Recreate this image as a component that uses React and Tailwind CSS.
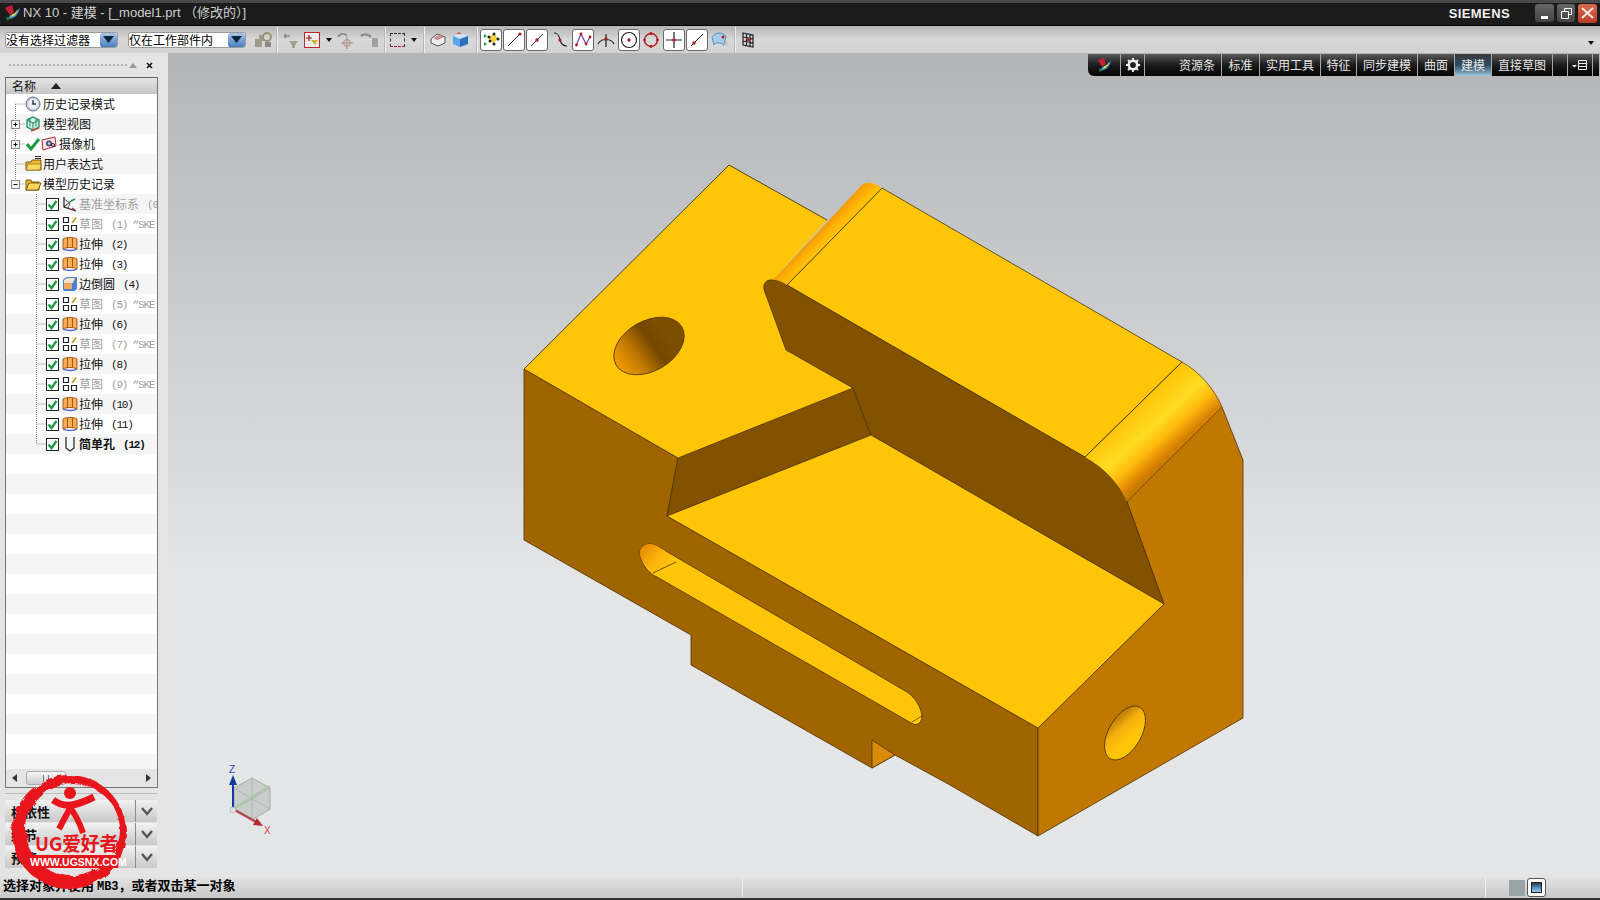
const cjk = { fontFamily: '"Noto Sans CJK SC", "Liberation Sans", sans-serif' }
const mono = { fontFamily: '"Liberation Mono", "Noto Sans CJK SC", monospace' }

function NxLogo({ size = 18 }) {
  return (
    <svg width={size} height={size} viewBox="0 0 18 18">
      <path d="M2 4 L9 1 L11 8 L7 11Z" fill="#c81e3a" />
      <path d="M7 11 C10 12 14 9 17 3 C16 10 12 15 5 15Z" fill="#3a9ad8" />
      <path d="M9 10 C11 10 13 8 15 5 C14 9 12 12 8 13Z" fill="#e8d84a" />
      <path d="M3 13 L8 14 L4 17Z" fill="#2f7d3a" />
    </svg>
  )
}

function Combo({ width, label }) {
  return (
    <div className="flex h-[16px] items-center rounded-[3px] border border-[#9a9a9a] bg-white" style={{ width }}>
      <span className="flex-1 text-[12px] leading-none whitespace-nowrap text-black">{label}</span>
      <span className="flex h-[14px] w-[17px] items-center justify-center rounded-[2px] bg-gradient-to-b from-[#a9c8ea] to-[#4b7fc0]">
        <svg width="11" height="7" viewBox="0 0 11 7"><path d="M0 0H11L5.5 7Z" fill="#10233f" /></svg>
      </span>
    </div>
  )
}

function Sep() {
  return <span className="h-[26px] w-[2px] border-l border-[#b8b8b8] bg-[#eeeeee]" />
}

function Caret() {
  return <svg width="6" height="4" viewBox="0 0 6 4"><path d="M0 0H6L3 4Z" fill="#111" /></svg>
}

function ToolBtn({ on, children }) {
  return (
    <span className={on ? 'flex h-[22px] w-[22px] items-center justify-center rounded-[3px] border border-[#6a6a6a] bg-white' : 'flex h-[22px] w-[22px] items-center justify-center'}>
      <svg width="18" height="18" viewBox="0 0 18 18" fill="none">{children}</svg>
    </span>
  )
}

function Toolbar() {
  const dot = '#b01c22'
  return (
    <div className="flex h-[27px] items-center bg-gradient-to-b from-[#b4b4b4] via-[#d8d8d8] to-[#d2d2d2] pl-[5px]">
      <Combo width={113} label="没有选择过滤器" />
      <span className="w-[10px]" />
      <Combo width={118} label="仅在工作部件内" />
      <span className="w-[7px]" />
      <svg width="20" height="18" viewBox="0 0 20 18"><path d="M2 8h7v8H2z M6 4h5v6H6z" fill="#a09a8c" /><circle cx="14" cy="6" r="4" fill="none" stroke="#9c8f70" strokeWidth="2" /><path d="M12 11h6v5h-6z" fill="#8a8a8a" /></svg>
      <span className="w-[3px]" />
      <Sep />
      <span className="w-[3px]" />
      <svg width="20" height="18" viewBox="0 0 20 18"><path d="M3 5h6M3 5l2-2M3 5l2 2" stroke="#8a8a8a" strokeWidth="1.5" fill="none" /><path d="M8 10h9l-3 4v3h-3v-3Z" fill="#a4a08c" /></svg>
      <span className="w-[3px]" />
      <span className="flex h-[16px] w-[16px] items-center justify-center border border-[#b8262c] bg-[#ececec]">
        <svg width="14" height="14" viewBox="0 0 14 14"><path d="M4 2v6M1 5h6" stroke="#8a1a1a" strokeWidth="1.2" /><path d="M6 7h7l-3 5Z" fill="#d4b02c" /></svg>
      </span>
      <span className="w-[6px]" />
      <Caret />
      <span className="w-[3px]" />
      <svg width="20" height="18" viewBox="0 0 20 18" fill="none"><path d="M3 6 C5 2 10 2 12 5" stroke="#8a8a8a" strokeWidth="1.6" /><circle cx="12" cy="12" r="3.5" stroke="#a48a80" /><path d="M12 6v12M6 12h12" stroke="#a48a80" /></svg>
      <span className="w-[4px]" />
      <svg width="22" height="18" viewBox="0 0 22 18"><path d="M2 5 C6 2 10 4 12 6" stroke="#8a8a8a" strokeWidth="2.5" fill="none" /><path d="M13 7h6v9h-6z" fill="#a0a0a0" /></svg>
      <span className="w-[3px]" />
      <Sep />
      <span className="w-[4px]" />
      <span className="h-[14px] w-[15px] border border-dashed border-[#333] border-b-[#b01c22]" />
      <span className="w-[6px]" />
      <Caret />
      <span className="w-[6px]" />
      <Sep />
      <span className="w-[4px]" />
      <svg width="18" height="18" viewBox="0 0 18 18" fill="none"><path d="M2 8 L8 3 L16 6 L16 12 L9 15 L2 12Z" fill="#eeeeee" stroke="#555" /><path d="M5 7 L11 4 L14 6 L8 9Z" fill="#e08a8a" stroke="#888" strokeWidth=".5" /></svg>
      <span className="w-[4px]" />
      <svg width="18" height="18" viewBox="0 0 18 18"><path d="M2 5 L10 2 L17 5 L9 8Z" fill="#cfe4f8" /><path d="M2 5 L9 8 V16 L2 13Z" fill="#5aa6e8" /><path d="M9 8 L17 5 V13 L9 16Z" fill="#2a6fc0" /><path d="M5 3h6l-3-2z" fill="#d8584a" /></svg>
      <span className="w-[7px]" />
      <Sep />
      <span className="w-[2px]" />
      <ToolBtn on>
        <path d="M2 3l3 2-3 2ZM2 11l3 2-3 2Z" fill="#1e9a3a" />
        <path d="M7 6l5-3 4 4-4 5-5-2Z" fill="#f1d23c" />
        {[[7, 6], [12, 3], [16, 8], [12, 13], [8, 10]].map(([x, y]) => <circle key={x + '-' + y} cx={x} cy={y} r="1.5" fill="#222" />)}
      </ToolBtn>
      <span className="w-px" />
      <ToolBtn on><path d="M3 15L14 4" stroke="#222" /><circle cx="15" cy="3" r="1.6" fill={dot} /></ToolBtn>
      <span className="w-px" />
      <ToolBtn on><path d="M3 15L15 3" stroke="#222" /><circle cx="9" cy="9" r="1.7" fill={dot} /></ToolBtn>
      <span className="w-px" />
      <ToolBtn><path d="M3 2 C8 2 8 6 9 9 C10 13 12 15 16 15" stroke="#222" strokeWidth="1.2" /><circle cx="9" cy="9" r="1.6" fill={dot} /></ToolBtn>
      <span className="w-px" />
      <ToolBtn on><path d="M2 15L7 3L12 13L16 6" stroke="#7a3ea8" strokeWidth="1.2" /><circle cx="7" cy="3" r="1.4" fill={dot} /><circle cx="2.5" cy="14" r="1.4" fill={dot} /><circle cx="12" cy="13" r="1.4" fill={dot} /><circle cx="16" cy="6" r="1.4" fill={dot} /></ToolBtn>
      <span className="w-px" />
      <ToolBtn><path d="M1 13 C4 7 14 7 17 13 M9 3V16" stroke="#222" strokeWidth="1.2" /><circle cx="9" cy="8" r="1.7" fill={dot} /></ToolBtn>
      <span className="w-px" />
      <ToolBtn on><circle cx="9" cy="9" r="7.5" stroke="#222" strokeWidth="1.2" /><circle cx="9" cy="9" r="1.7" fill={dot} /></ToolBtn>
      <ToolBtn><circle cx="9" cy="9" r="6.5" stroke="#b01c22" strokeWidth="1.4" /><circle cx="9" cy="2.5" r="1.4" fill={dot} /><circle cx="2.5" cy="9" r="1.4" fill={dot} /><circle cx="15.5" cy="9" r="1.4" fill={dot} /><circle cx="9" cy="15.5" r="1.4" fill={dot} /></ToolBtn>
      <span className="w-px" />
      <ToolBtn on><path d="M9 1V17M1 9H17" stroke="#222" strokeWidth="1.2" /><circle cx="9" cy="9" r="1.7" fill={dot} /></ToolBtn>
      <span className="w-px" />
      <ToolBtn on><path d="M3 15L15 3" stroke="#222" /><circle cx="6" cy="12" r="1.7" fill={dot} /></ToolBtn>
      <ToolBtn><path d="M2 6 C6 1 12 1 16 5 L14 14 C10 11 6 11 4 14Z" fill="#a8cdea" stroke="#5a8fc0" /><circle cx="13" cy="6" r="1.5" fill={dot} /><path d="M16 9l1 5h-3Z" fill="#bbb" /></ToolBtn>
      <span className="w-[4px]" />
      <Sep />
      <span className="w-[6px]" />
      <svg width="12" height="16" viewBox="0 0 12 16" fill="none"><path d="M1 1L11 3V15L1 13ZM1 5L11 7M1 9L11 11M4.5 2V14M8 2.500V15" stroke="#222" strokeWidth="1.200" /><path d="M5 6h3v3H5z" fill="#c0262c" /></svg>
      <span className="flex-1" />
      <span className="mr-[6px] mt-[6px]"><Caret /></span>
    </div>
  )
}

const tabs = [
  { w: 76, label: '资源条', right: true },
  { w: 37, label: '标准' },
  { w: 60, label: '实用工具' },
  { w: 35, label: '特征' },
  { w: 60, label: '同步建模' },
  { w: 36, label: '曲面' },
  { w: 36, label: '建模', active: true },
  { w: 60, label: '直接草图' },
  { w: 14, label: '' },
]

function Ribbon() {
  return (
    <div className="absolute top-px right-px flex h-[22px] gap-px overflow-hidden rounded-bl-[6px] bg-[#a8a8a8] text-[12px] leading-none text-[#e6e6e6]">
      <div className="flex w-[32px] items-center justify-center bg-gradient-to-b from-[#5a5a5a] via-[#1c1c1c] to-[#050505]"><NxLogo size={16} /></div>
      <div className="flex w-[23px] items-center justify-center bg-gradient-to-b from-[#5a5a5a] via-[#1c1c1c] to-[#050505]">
        <svg width="14" height="14" viewBox="0 0 14 14"><circle cx="7" cy="7" r="4.200" fill="none" stroke="#eee" strokeWidth="2.600" /><path d="M7 0v3M7 11v3M0 7h3M11 7h3M2 2l2 2M10 10l2 2M12 2l-2 2M4 10l-2 2" stroke="#eee" strokeWidth="1.800" /></svg>
      </div>
      {tabs.map((t, i) => (
        <div
          key={i}
          style={{ width: t.w }}
          className={(t.active ? 'bg-gradient-to-b from-[#3a3a3a] via-[#2f4a5c] to-[#9cc8e0] ' : 'bg-gradient-to-b from-[#5a5a5a] via-[#1c1c1c] to-[#050505] ') + (t.right ? 'flex items-center justify-end pr-[6px]' : 'flex items-center justify-center')}
        >
          {t.label}
        </div>
      ))}
      <div className="flex w-[24px] items-center justify-center bg-gradient-to-b from-[#5a5a5a] via-[#1c1c1c] to-[#050505]">
        <svg width="17" height="12" viewBox="0 0 17 12" fill="none"><path d="M0 6h5L2.500 8.500Z" fill="#eee" /><path d="M6.500 1.500h8v9h-8zM6.500 4.500h8M6.500 7.500h8" stroke="#eee" /></svg>
      </div>
      <div className="w-[6px] bg-gradient-to-b from-[#5a5a5a] via-[#1c1c1c] to-[#050505]" />
    </div>
  )
}

const icons = {
  clock: (
    <svg width="16" height="16" viewBox="0 0 16 16"><circle cx="8" cy="8" r="7" fill="#c4ccd8" stroke="#6a7484" /><circle cx="8" cy="8" r="5" fill="#eef2f6" /><path d="M8 4v4h3" stroke="#2a3140" strokeWidth="1.400" fill="none" /></svg>
  ),
  view: (
    <svg width="16" height="16" viewBox="0 0 16 16" fill="none"><path d="M8 1l6 3v7l-6 3-6-3V4Z" fill="#d6f0e2" stroke="#1d8a5e" strokeWidth="1.300" /><path d="M2 4l6 3 6-3M8 7v7M5 2.500v8M11 2.500v8" stroke="#1d8a5e" /><path d="M6 15l8-3" stroke="#d8483a" strokeWidth="1.500" /></svg>
  ),
  camera: (
    <svg width="16" height="16" viewBox="0 0 16 16"><path d="M1 4l13-3 1 9-13 4Z" fill="#fbe6e6" stroke="#b0262c" /><circle cx="8" cy="7.500" r="3" fill="#4a4a78" /><circle cx="8" cy="7.500" r="1.200" fill="#d8d8f0" /><circle cx="12" cy="9" r="1.500" fill="none" stroke="#222" /></svg>
  ),
  folder: (
    <svg width="17" height="16" viewBox="0 0 17 16"><path d="M1 6h5l1-2h9v10H1Z" fill="#f0b82c" stroke="#7a5a10" /><path d="M1 14l2-6h13l-1 6Z" fill="#fcd860" stroke="#7a5a10" strokeWidth=".6" /><path d="M10 0.500h6M10 2.500h6" stroke="#333" /></svg>
  ),
  open: (
    <svg width="17" height="16" viewBox="0 0 17 16"><path d="M1 4h5l1 2h7v8H1Z" fill="#f0b82c" stroke="#7a5a10" /><path d="M1 14l3-7h12l-3 7Z" fill="#fcd860" stroke="#7a5a10" /></svg>
  ),
  extrude: (
    <svg width="16" height="16" viewBox="0 0 16 16"><path d="M1 3 C4 1 12 1 15 3 V13 C12 11 4 11 1 13Z" fill="#f5ad5a" stroke="#a85a10" /><path d="M5.500 2V12M10.500 2V12" stroke="#a85a10" /><path d="M1 13 C4 15 12 15 15 13" stroke="#5a6ac0" strokeWidth="1.500" fill="none" /></svg>
  ),
  sketch: (
    <svg width="16" height="16" viewBox="0 0 16 16" fill="none"><path d="M1.500 1.500h5v5h-5zM1.500 9.500h5v5h-5zM9.500 9.500h5v5h-5z" stroke="#222" strokeWidth="1.200" /><path d="M10 7L14 1.500" stroke="#c8a030" strokeWidth="2" /></svg>
  ),
  datum: (
    <svg width="16" height="16" viewBox="0 0 16 16" fill="none"><path d="M2 1V11L14 15" stroke="#222" strokeWidth="1.200" /><path d="M2 11L10 4" stroke="#222" /><path d="M2 3L8 7L6 12" stroke="#555" /><path d="M9 5l4-2" stroke="#1e9a3a" strokeWidth="1.500" /><path d="M10 12l3 2" stroke="#c82c2c" strokeWidth="1.500" /></svg>
  ),
  blend: (
    <svg width="16" height="16" viewBox="0 0 16 16"><path d="M1 5 C1 2 4 1 8 1 H15 V12 C15 14 13 15 11 15 H3 C2 15 1 14 1 13Z" fill="#4a7ed0" /><path d="M2 5 C2 3 5 2 8 2 H13 L11 7 H2Z" fill="#f6e2c4" /><path d="M2 7h8v6H2z" fill="#eaa860" /></svg>
  ),
  hole: (
    <svg width="16" height="16" viewBox="0 0 16 16" fill="none"><path d="M4 1V12L8 15L12 12V1" stroke="#222" strokeWidth="1.200" /></svg>
  ),
}

function Check() {
  return (
    <svg width="13" height="13" viewBox="0 0 13 13"><rect x=".5" y=".5" width="12" height="12" fill="#fff" stroke="#222" /><path d="M2.500 6.500L5.500 10L10.500 3" stroke="#1d9a45" strokeWidth="2.400" fill="none" /></svg>
  )
}

function Guide({ width, kind, last, top }) {
  // tree gutter: expander box and dotted connectors
  const dots = { stroke: '#888', strokeDasharray: '1 1', fill: 'none' }
  if (kind === 'feature') {
    return (
      <svg width="40" height="20" viewBox="0 0 40 20" className="shrink-0">
        <path d={last ? 'M30.500 0V10H40' : 'M30.500 0V20M30.500 10H40'} {...dots} />
      </svg>
    )
  }
  return (
    <svg width={width} height="20" viewBox={`0 0 ${width} 20`} className="shrink-0">
      <path d={(top ? 'M9.500 10V20' : last ? 'M9.500 0V10' : 'M9.500 0V20') + ' M9.500 10H19'} {...dots} />
      {kind && (
        <>
          <rect x="5.500" y="6.500" width="8" height="8" fill="#f4f4f4" stroke="#888" />
          <path d={kind === 'plus' ? 'M7.500 10.500h4M9.500 8.500v4' : 'M7.500 10.500h4'} stroke="#111" />
        </>
      )}
    </svg>
  )
}

const features = [
  { icon: 'datum', label: '基准坐标系', note: '(0', dim: true },
  { icon: 'sketch', label: '草图', note: '(1) “SKE', dim: true },
  { icon: 'extrude', label: '拉伸', note: '(2)' },
  { icon: 'extrude', label: '拉伸', note: '(3)' },
  { icon: 'blend', label: '边倒圆', note: '(4)' },
  { icon: 'sketch', label: '草图', note: '(5) “SKE', dim: true },
  { icon: 'extrude', label: '拉伸', note: '(6)' },
  { icon: 'sketch', label: '草图', note: '(7) “SKE', dim: true },
  { icon: 'extrude', label: '拉伸', note: '(8)' },
  { icon: 'sketch', label: '草图', note: '(9) “SKE', dim: true },
  { icon: 'extrude', label: '拉伸', note: '(10)' },
  { icon: 'extrude', label: '拉伸', note: '(11)' },
  { icon: 'hole', label: '简单孔', note: '(12)', bold: true },
]

function Tree() {
  const top = [
    { icon: 'clock', label: '历史记录模式', top: true },
    { icon: 'view', label: '模型视图', kind: 'plus' },
    { icon: 'camera', label: '摄像机', kind: 'plus', check: true },
    { icon: 'folder', label: '用户表达式' },
    { icon: 'open', label: '模型历史记录', kind: 'minus', last: true },
  ]
  const stripes = Array.from({ length: 16 })
  return (
    <div className="flex-1 overflow-hidden">
      {top.map((r, i) => (
        <div key={r.label} className={'flex h-[20px] items-center text-[12px] leading-none text-[#111] ' + (i % 2 ? 'bg-[#f5f5f5]' : 'bg-white')}>
          <Guide width={19} kind={r.kind} last={r.last} top={r.top} />
          {r.check && (
            <svg width="16" height="14" viewBox="0 0 16 14" className="shrink-0"><path d="M2 7L6 12L14 2" stroke="#1d9a45" strokeWidth="3" fill="none" /></svg>
          )}
          <span className="flex w-[18px] shrink-0 items-center">{icons[r.icon]}</span>
          <span className="whitespace-nowrap">{r.label}</span>
        </div>
      ))}
      {features.map((f, i) => (
        <div key={i} className={'flex h-[20px] items-center overflow-hidden text-[12px] leading-none whitespace-nowrap ' + ((i + 5) % 2 ? 'bg-[#f5f5f5]' : 'bg-white') + (f.dim ? ' text-[#a0a0a0]' : ' text-[#111]') + (f.bold ? ' font-bold' : '')}>
          <Guide kind="feature" last={i === features.length - 1} />
          <span className="flex w-[16px] shrink-0"><Check /></span>
          <span className="flex w-[17px] shrink-0 items-center">{icons[f.icon]}</span>
          <span>{f.label}</span>
          <span className="mt-[2px] ml-[8px] text-[11px] tracking-[-1.2px]" style={mono}>{f.note}</span>
        </div>
      ))}
      {stripes.map((_, i) => (
        <div key={i} className={'h-[20px] ' + (i % 2 ? 'bg-[#f5f5f5]' : 'bg-white')} />
      ))}
    </div>
  )
}

function Scrollbar() {
  return (
    <div className="flex h-[18px] shrink-0 items-center bg-[#e4e4e4] px-[6px]">
      <svg width="5" height="8" viewBox="0 0 5 8"><path d="M5 0V8L0 4Z" fill="#333" /></svg>
      <div className="ml-[9px] flex h-[14px] w-[40px] items-center justify-center rounded-[3px] border border-[#aaa] bg-gradient-to-b from-[#f6f6f6] to-[#cccccc]">
        <span className="h-[7px] w-[6px] border-x border-[#777]" />
      </div>
      <span className="flex-1" />
      <svg width="5" height="8" viewBox="0 0 5 8"><path d="M0 0V8L5 4Z" fill="#333" /></svg>
    </div>
  )
}

function Accordion({ label }) {
  return (
    <div className="flex h-[22px] w-[152px] items-center bg-gradient-to-b from-[#f2f2f2] to-[#c8c8c8] text-[13px] leading-none font-bold text-[#111]">
      <span className="flex-1 pl-[6px]">{label}</span>
      <span className="flex h-full w-[22px] items-center justify-center border-l border-[#8a8a8a]">
        <svg width="12" height="9" viewBox="0 0 12 9"><path d="M1 1L6 7L11 1" stroke="#555" strokeWidth="2.400" fill="none" /></svg>
      </span>
    </div>
  )
}

function SidePanel() {
  return (
    <div className="flex w-[168px] shrink-0 flex-col bg-[#e4e4e4] pb-[8px] pl-[5px]">
      <div className="flex h-[24px] shrink-0 items-center">
        <span className="ml-[4px] w-[118px] border-t-2 border-dotted border-[#b0b0b0]" />
        <svg className="ml-[2px]" width="8" height="5" viewBox="0 0 8 5"><path d="M0 5H8L4 0Z" fill="#9a9a9a" /></svg>
        <svg className="ml-[9px]" width="7" height="7" viewBox="0 0 7 7"><path d="M1 1L6 6M6 1L1 6" stroke="#111" strokeWidth="1.600" /></svg>
      </div>
      <div className="flex h-[711px] w-[153px] flex-col border border-[#777] border-t-[#666]">
        <div className="flex h-[16px] shrink-0 items-center bg-gradient-to-b from-[#e6e6e6] to-[#c6c6c6] pl-[6px] text-[12px] leading-none text-[#111]">
          名称
          <svg className="ml-[15px]" width="10" height="6" viewBox="0 0 10 6"><path d="M0 6H10L5 0Z" fill="#222" /></svg>
        </div>
        <Tree />
        <Scrollbar />
      </div>
      <div className="mt-[5px] mb-[6px] h-px w-[152px] bg-[#bdbdbd]" />
      <div className="flex flex-col gap-px">
        <Accordion label="相依性" />
        <Accordion label="细节" />
        <Accordion label="预览" />
      </div>
    </div>
  )
}

function Model() {
  const edge = { stroke: '#4f3400', strokeWidth: 0.8, strokeLinejoin: 'round' }
  return (
    <svg width="1432" height="824" viewBox="168 53 1432 824" className="block">
      <defs>
        <linearGradient id="fil1" gradientUnits="userSpaceOnUse" x1="817" y1="233" x2="828" y2="243.500">
          <stop offset="0" stopColor="#f29c00" />
          <stop offset="0.5" stopColor="#ffb208" />
          <stop offset="1" stopColor="#ffc508" />
        </linearGradient>
        <linearGradient id="fil2" gradientUnits="userSpaceOnUse" x1="1134" y1="410" x2="1175" y2="455">
          <stop offset="0" stopColor="#ffc508" />
          <stop offset="0.42" stopColor="#ffdc22" />
          <stop offset="0.65" stopColor="#ffba0c" />
          <stop offset="0.88" stopColor="#dc8404" />
          <stop offset="1" stopColor="#c07800" />
        </linearGradient>
        <linearGradient id="hole1" gradientUnits="userSpaceOnUse" x1="615" y1="346" x2="668" y2="340">
          <stop offset="0" stopColor="#ec9600" />
          <stop offset="0.35" stopColor="#bc7600" />
          <stop offset="0.7" stopColor="#744700" />
          <stop offset="1" stopColor="#7c4e00" />
        </linearGradient>
        <linearGradient id="hole2" gradientUnits="userSpaceOnUse" x1="1132" y1="708" x2="1118" y2="750">
          <stop offset="0" stopColor="#8e5600" />
          <stop offset="0.45" stopColor="#f5b010" />
          <stop offset="0.75" stopColor="#ffc508" />
          <stop offset="1" stopColor="#ffc508" />
        </linearGradient>
        <linearGradient id="slotEnd" gradientUnits="userSpaceOnUse" x1="642" y1="548" x2="668" y2="570">
          <stop offset="0" stopColor="#e88c00" />
          <stop offset="0.6" stopColor="#ffb810" />
          <stop offset="1" stopColor="#ffc508" />
        </linearGradient>
      </defs>

      {/* faces */}
      <path d="M524 369L678 458L667 516L1038 728V836L950 785L895 755L872 768L691 665V635L524 540Z" fill="#a06400" {...edge} />
      <path d="M872 740L895 755L872 768Z" fill="#d98c0a" {...edge} />
      <path d="M1038 836V728L1164 604L1127 502L1222 407L1243 460V718Z" fill="#c07800" {...edge} />
      <path d="M729 165L827 220L773 280C765 279 761 285 766 295L786 350L853 388L678 458L524 369Z" fill="#ffc508" />
      <path d="M524 369L729 165L827 220" fill="none" stroke="#2c2400" strokeWidth="0.8" />
      <path d="M678 458L524 369" fill="none" {...edge} />
      <path d="M678 458L853 388L871 435L667 516Z" fill="#835200" {...edge} />
      <path d="M787 285L1085 457C1105 468 1120 485 1127 502L1164 604L871 435L853 388L786 350L766 295C761 285 765 279 773 280C778 280 783 282 787 285Z" fill="#835200" {...edge} />
      <path d="M667 516L871 435L1164 604L1038 728Z" fill="#ffc508" {...edge} />
      <path d="M882 188L1182 362L1085 457L787 285Z" fill="#ffc508" stroke="#2c2400" strokeWidth="0.7" />
      <path d="M773 280L861 186C865 182 872 181 882 188L787 285C783 282 778 280 773 280Z" fill="url(#fil1)" />
      <path d="M882 188L787 285" stroke="#3c2c00" strokeWidth="0.7" fill="none" />
      <path d="M1085 457C1105 468 1120 485 1127 502L1222 407C1215 390 1200 372 1182 362Z" fill="url(#fil2)" />
      <path d="M1085 457L1182 362" stroke="#2c2400" strokeWidth="0.8" fill="none" />
      <path d="M1127 502L1222 407" stroke="#7a4c00" strokeWidth="0.8" fill="none" />
      <path d="M1182 362C1200 372 1215 390 1222 407" stroke="#6a4400" strokeWidth="0.8" fill="none" />

      {/* holes */}
      <ellipse cx="649" cy="346" rx="38" ry="25" transform="rotate(-30 649 346)" fill="url(#hole1)" {...edge} />
      <ellipse cx="1125" cy="733" rx="29.700" ry="16.300" transform="rotate(-60 1125 733)" fill="url(#hole2)" {...edge} />

      {/* slot */}
      <path d="M657 577C650 574 642 566 640 555C639 548 644 544 650 544C655 544 660 548 664 550L907 692C916 698 921 708 922 716C922 722 918 726 913 724Z" fill="#ffc508" {...edge} />
      <path d="M653 573C648 569 642 562 640 555C639 548 644 544 650 544C655 544 660 548 664 550L676 562Z" fill="url(#slotEnd)" />
      <path d="M653 573L676 562" stroke="#4f3400" strokeWidth="0.8" fill="none" />
      <path d="M912 722L922 716" stroke="#4f3400" strokeWidth="0.7" fill="none" />

      {/* triad */}
      <path d="M252 778L270 788V809L252 820L234 809V788Z" fill="#b9bdb9" fillOpacity="0.6" stroke="#a8aca8" />
      <path d="M252 799V778M252 799L270 809M252 799L234 788M252 799L234 809M252 799L270 788M252 799V820" stroke="#a8aca8" strokeWidth="0.7" />
      <path d="M233 809L270 786" stroke="#a9c9a4" strokeWidth="2" />
      <path d="M233 809V783" stroke="#123c9c" strokeWidth="2" />
      <path d="M233 775L229 785H237Z" fill="#123c9c" />
      <path d="M233 809L258 823" stroke="#b44a50" strokeWidth="2.500" />
      <path d="M263 826L253 825L257 818Z" fill="#b02c34" />
      <circle cx="233" cy="810" r="3" fill="#e0e0e0" stroke="#999" strokeWidth="0.5" />
      <text x="229" y="773" fontSize="10" fill="#2a3eb0" fontFamily="Liberation Sans">Z</text>
      <text x="264" y="834" fontSize="10" fill="#c8464a" fontFamily="Liberation Sans">X</text>
    </svg>
  )
}

function Watermark() {
  return (
    <svg width="130" height="128" viewBox="8 768 130 128" className="pointer-events-none absolute top-[768px] left-[8px]">
      <defs>
        <filter id="rough" x="-10%" y="-10%" width="120%" height="120%">
          <feTurbulence type="fractalNoise" baseFrequency="0.09" numOctaves="2" seed="4" />
          <feDisplacementMap in="SourceGraphic" scale="7" />
        </filter>
      </defs>
      <g filter="url(#rough)">
        <path fillRule="evenodd" d="M69 775a57 57 0 1 0 .1 0Z M73 784a47 46 0 1 1 -.1 0Z" fill="#e8151b" />
      </g>
      <circle cx="70" cy="793" r="6" fill="#e8151b" />
      <g fill="none" stroke="#e8151b" strokeLinecap="butt">
        <path d="M53 800C63 807 72 808 94 797" strokeWidth="7" />
        <path d="M69 806C76 815 80 824 83 833" strokeWidth="6" />
        <path d="M70 808L59 829" strokeWidth="6" />
      </g>
      <text x="35" y="851" fontSize="19" fontWeight="700" textLength="83" lengthAdjust="spacingAndGlyphs" fill="#e8151b" style={cjk}>UG爱好者</text>
      <path d="M30 855H121L118 868H27Z" fill="#e8151b" />
      <text x="30" y="866" fontSize="10.500" fontWeight="700" fill="#fff" fontFamily="Liberation Sans">WWW.UGSNX.COM</text>
    </svg>
  )
}

export default function App() {
  return (
    <div className="relative flex h-[900px] w-[1600px] flex-col overflow-hidden bg-[#e4e4e4]" style={cjk}>
      {/* title bar */}
      <div className="flex h-[26px] shrink-0 items-center border-t-[3px] border-b border-t-[#4a4a4a] border-b-black bg-[#1b1b1b] pb-[2px] pl-[3px]">
        <NxLogo />
        <span className="-mt-px ml-[2px] text-[13px] leading-none whitespace-pre text-[#d0d0d0]" style={{ fontFamily: '"Liberation Sans", "Noto Sans CJK SC", sans-serif' }}>NX 10 - 建模 - [_model1.prt （修改的）]</span>
        <span className="flex-1" />
        <span className="text-[13px] leading-none font-bold tracking-[0.4px] text-[#f0f0f0]" style={{ fontFamily: '"Liberation Sans", sans-serif' }}>SIEMENS</span>
        <span className="ml-[25px] flex h-[18px] w-[19px] items-end justify-center rounded-[3px] bg-gradient-to-b from-[#666] to-[#444] pb-[3px]"><span className="h-[3px] w-[7px] bg-white" /></span>
        <span className="ml-[3px] flex h-[18px] w-[18px] items-center justify-center rounded-[3px] bg-gradient-to-b from-[#666] to-[#444]">
          <svg width="11" height="11" viewBox="0 0 11 11" fill="none"><path d="M3.500 3V.5h7v6H8M.5 3.500h7v7h-7z" stroke="#fff" /></svg>
        </span>
        <span className="mr-[3px] ml-[3px] flex h-[19px] w-[19px] items-center justify-center rounded-[3px] bg-gradient-to-b from-[#d86a50] to-[#b83c26]">
          <svg width="13" height="12" viewBox="0 0 13 12"><path d="M1 1L12 11M12 1L1 11" stroke="#f8e8e0" strokeWidth="2" /></svg>
        </span>
      </div>

      <Toolbar />

      <div className="flex min-h-0 flex-1">
        <SidePanel />
        <div className="relative flex-1 bg-gradient-to-b from-[#b4b5b7] to-[#e5e6e8] to-[65%]">
          <Model />
          <Ribbon />
        </div>
      </div>

      {/* status bar */}
      <div className="flex h-[23px] shrink-0 items-center border-b-2 border-b-[#333] bg-gradient-to-b from-[#e2e2e2] to-[#c8c8c8] text-[13px] leading-none font-bold text-black">
        <span className="-mt-[3px] w-[743px] border-r border-[#eee] pl-[3px] leading-[19px] whitespace-pre">选择对象并使用 <span style={mono} className="text-[12px]">MB3</span>，或者双击某一对象</span>
        <span className="h-full w-[743px] border-r border-[#eee]" />
        <span className="ml-[23px] h-[16px] w-[16px] bg-[#98a4a8]" />
        <span className="ml-[2px] flex h-[19px] w-[19px] items-center justify-center rounded-[3px] border border-[#555] bg-white">
          <span className="h-[11px] w-[11px] border border-[#222] bg-gradient-to-b from-[#333] via-[#4f8fd0] to-[#9cc4e8]" />
        </span>
      </div>

      <Watermark />
    </div>
  )
}
